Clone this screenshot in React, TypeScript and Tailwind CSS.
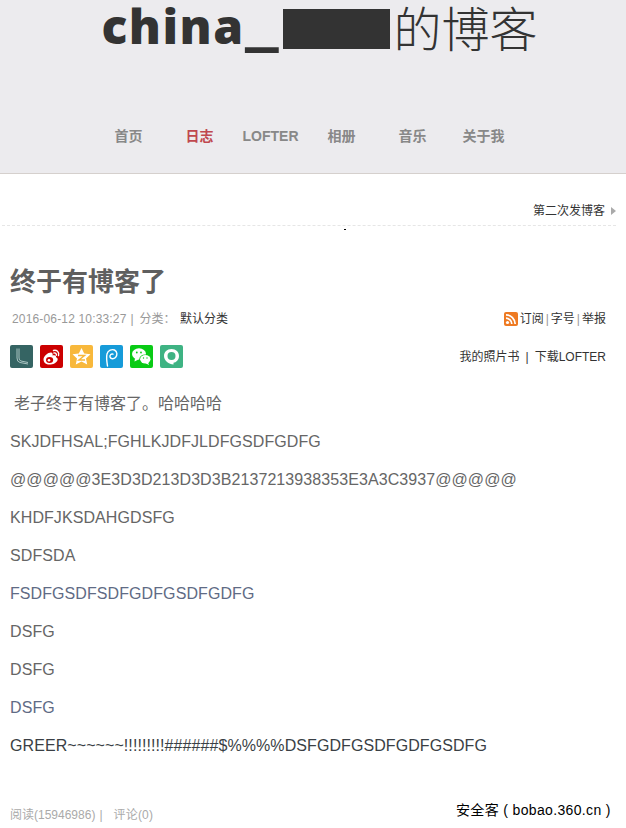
import React from 'react';

const navItems = [
  { label: '首页', active: false },
  { label: '日志', active: true },
  { label: 'LOFTER', active: false },
  { label: '相册', active: false },
  { label: '音乐', active: false },
  { label: '关于我', active: false },
];

const lines = [
  { text: 'SKJDFHSAL;FGHLKJDFJLDFGSDFGDFG', color: 'text-[#666666]' },
  { text: '@@@@@3E3D3D213D3D3B2137213938353E3A3C3937@@@@@', color: 'text-[#666666]' },
  { text: 'KHDFJKSDAHGDSFG', color: 'text-[#666666]' },
  { text: 'SDFSDA', color: 'text-[#666666]' },
  { text: 'FSDFGSDFSDFGDFGSDFGDFG', color: 'text-[#5f6b85]' },
  { text: 'DSFG', color: 'text-[#666666]' },
  { text: 'DSFG', color: 'text-[#666666]' },
  { text: 'DSFG', color: 'text-[#5f6b85]' },
  { text: 'GREER~~~~~~!!!!!!!!!######$%%%%DSFGDFGSDFGDFGSDFG', color: 'text-[#3a3f45]' },
];

const ShareIcons = () => (
  <div className="flex gap-[7px]">
    {/* lofter */}
    <svg width="23" height="23" viewBox="0 0 23 23">
      <rect width="23" height="23" rx="2" fill="#356463" />
      <path d="M7 3.5 V13 Q7 17 10 17.5 L18 19 M9 3.5 V13 Q9 15.5 11 16 L18 17.5" fill="none" stroke="#a9c4c2" strokeWidth="1" />
    </svg>
    {/* weibo */}
    <svg width="23" height="23" viewBox="0 0 23 23">
      <rect width="23" height="23" rx="2" fill="#cc0000" />
      <path d="M3.5 14.5 C3.5 11 8 7.5 11 7.5 C12.5 7.5 13 9 12.5 10.5 C14.5 9.8 16.5 10.3 16 12.3 C17.5 13 18 14 17.5 15.2 C16.5 18 13 19.5 9.5 19.5 C6 19.5 3.5 17.5 3.5 14.5 Z" fill="#fff" />
      <ellipse cx="9.6" cy="15" rx="3.6" ry="2.9" fill="#cc0000" />
      <circle cx="9" cy="15.3" r="1.3" fill="#fff" />
      <path d="M13.5 5.5 C16.5 4.5 19.5 7 18.5 10.5 M14 8 C15.5 7.6 16.8 8.8 16.3 10.3" fill="none" stroke="#fff" strokeWidth="1.4" strokeLinecap="round" />
    </svg>
    {/* qzone */}
    <svg width="23" height="23" viewBox="0 0 23 23">
      <rect width="23" height="23" rx="2" fill="#f8b83b" />
      <path d="M11.5 3 L14.2 8.5 L20.5 9.3 L16 13.5 L17.2 19.5 L11.5 16.6 L5.8 19.5 L7 13.5 L2.5 9.3 L8.8 8.5 Z" fill="#fff" />
      <path d="M8 10.5 H14.5 L9 15 H15" fill="none" stroke="#f8b83b" strokeWidth="1.5" />
    </svg>
    {/* pengyou */}
    <svg width="23" height="23" viewBox="0 0 23 23">
      <rect width="23" height="23" rx="2" fill="#169bd9" />
      <path d="M7.5 21 C6.5 15 6.5 11 7 9 C8 5 12 4 14.5 5 C17.5 6.5 17.5 10.5 15.5 12.5 C13.5 14.5 10.5 14 10 12 C9.5 10 11.5 8.5 13 9.2" fill="none" stroke="#fff" strokeWidth="1.4" strokeLinecap="round" />
    </svg>
    {/* wechat */}
    <svg width="23" height="23" viewBox="0 0 23 23">
      <rect width="23" height="23" rx="2" fill="#09cb15" />
      <ellipse cx="9" cy="9" rx="7" ry="5.8" fill="#fff" />
      <path d="M5 13 L4.5 16.5 L8.5 14.5 Z" fill="#fff" />
      <ellipse cx="15.3" cy="14.3" rx="6" ry="4.9" fill="#09cb15" />
      <ellipse cx="15.3" cy="14.3" rx="5.2" ry="4.2" fill="#fff" />
      <path d="M18 17.5 L19 20 L15.5 18.3 Z" fill="#fff" />
      <circle cx="6.8" cy="7.5" r="0.9" fill="#09cb15" />
      <circle cx="11" cy="7.5" r="0.9" fill="#09cb15" />
      <circle cx="13.5" cy="13" r="0.7" fill="#09cb15" />
      <circle cx="17" cy="13" r="0.7" fill="#09cb15" />
    </svg>
    {/* qq circle */}
    <svg width="23" height="23" viewBox="0 0 23 23">
      <rect width="23" height="23" rx="2" fill="#3eb383" />
      <path d="M11.5 4 C16 4 19 7 19 11 C19 15 16 17.5 13.5 17.8 L13.5 19.5 C9 19 4 16 4 11 C4 7 7 4 11.5 4 Z" fill="#fff" />
      <circle cx="11.5" cy="11" r="4" fill="#3eb383" />
    </svg>
  </div>
);

export default function App() {
  return (
    <div className="relative h-[828px] w-[626px] overflow-hidden bg-white font-['Liberation_Sans','Noto_Sans_CJK_SC',sans-serif]">
      {/* Header */}
      <header className="h-[174px] border-b border-[#d5d0cd] bg-[#ecebee]">
        <div className="flex h-[62px] items-start justify-center pl-[13px] pt-[2px] text-[48px] leading-none text-[#333333]">
          <span className="font-['Open_Sans','Noto_Sans',sans-serif] font-extrabold tracking-[1.5px]">china</span>
          <span className="w-[36px] font-['Open_Sans','Noto_Sans',sans-serif] font-extrabold">
            <span className="inline-block origin-left scale-x-[1.4]">_</span>
          </span>
          <span className="ml-[2px] mt-[7px] h-[40px] w-[107px] bg-[#333333]" />
          <span className="ml-[4px] font-['Noto_Sans_CJK_SC',serif] font-light">的博客</span>
        </div>
        <nav className="mt-[64px] flex justify-center pr-[14px] text-[14px] font-bold leading-5 text-[#888888]">
          {navItems.map((item) => (
            <a key={item.label} className={`w-[71px] text-center ${item.active ? 'text-[#c0484f]' : ''}`}>
              {item.label}
            </a>
          ))}
        </nav>
      </header>

      {/* Prev link */}
      <div className="mx-[2px] mt-[27px] flex h-[25px] w-[614px] items-center justify-end gap-[7px] border-b border-dashed border-[#e6e6e6] pb-[4px] text-[12px] text-[#333333]">
        <span className="mr-[-1px]">第二次发博客</span>
        <span className="h-0 w-0 border-y-[4px] border-l-[5px] border-y-transparent border-l-[#aaaaaa]" />
      </div>
      <div className="ml-[344px] mt-[3px] h-[1px] w-[2px] bg-black" />

      {/* Article */}
      <main className="px-[10px]">
        <h1 className="mt-[35px] text-[26px] font-bold leading-[34px] text-[#5f5f5f]">终于有博客了</h1>

        <div className="mt-[11px] flex h-[18px] items-center justify-between pl-[2px] pr-[10px] text-[12px] text-[#999999]">
          <div className="flex items-center">
            <span className="tracking-[0.16px]">2016-06-12 10:33:27</span>
            <span className="ml-[4px]">|</span>
            <span className="ml-[6px]">分类：</span>
            <span className="ml-[4.5px] text-[#333333]">默认分类</span>
          </div>
          <div className="flex items-center text-[#333333]">
            <svg width="14" height="14" viewBox="0 0 14 14" className="mr-[2px]">
              <rect width="14" height="14" rx="2" fill="#ee7a22" />
              <circle cx="3.5" cy="10.5" r="1.6" fill="#fff" />
              <path d="M2 6.2 A6 6 0 0 1 7.8 12 M2 2.8 A9.4 9.4 0 0 1 11.2 12" fill="none" stroke="#fff" strokeWidth="1.7" />
            </svg>
            <span>订阅</span>
            <span className="mx-[2px] text-[#999999]">|</span>
            <span>字号</span>
            <span className="mx-[2px] text-[#999999]">|</span>
            <span>举报</span>
          </div>
        </div>

        <div className="mt-[17px] flex items-center justify-between pr-[10px] text-[12px] text-[#333333]">
          <ShareIcons />
          <div className="flex items-center">
            <span>我的照片书</span>
            <span className="mx-[6px]">|</span>
            <span>下载LOFTER</span>
          </div>
        </div>

        <div className="mt-[17px] text-[16px] leading-[38px] tracking-[0.08px]">
          <p className="pl-[4px] tracking-normal text-[#666666]">老子终于有博客了。哈哈哈哈</p>
          {lines.map((line, i) => (
            <p key={i} className={line.color}>{line.text}</p>
          ))}
        </div>

        <div className="mt-[41px] flex h-[18px] items-center text-[12px] text-[#aaaaaa]">
          <span>阅读(15946986)</span>
          <span className="ml-[4px]">|</span>
          <span className="ml-[11px] tracking-[0.2px]">评论(0)</span>
        </div>
      </main>

      {/* Watermark */}
      <div className="absolute left-[456px] top-[800px] whitespace-nowrap text-[14px] leading-5 tracking-[0.35px] text-black">
        安全客 ( bobao.360.cn )
      </div>
    </div>
  );
}
